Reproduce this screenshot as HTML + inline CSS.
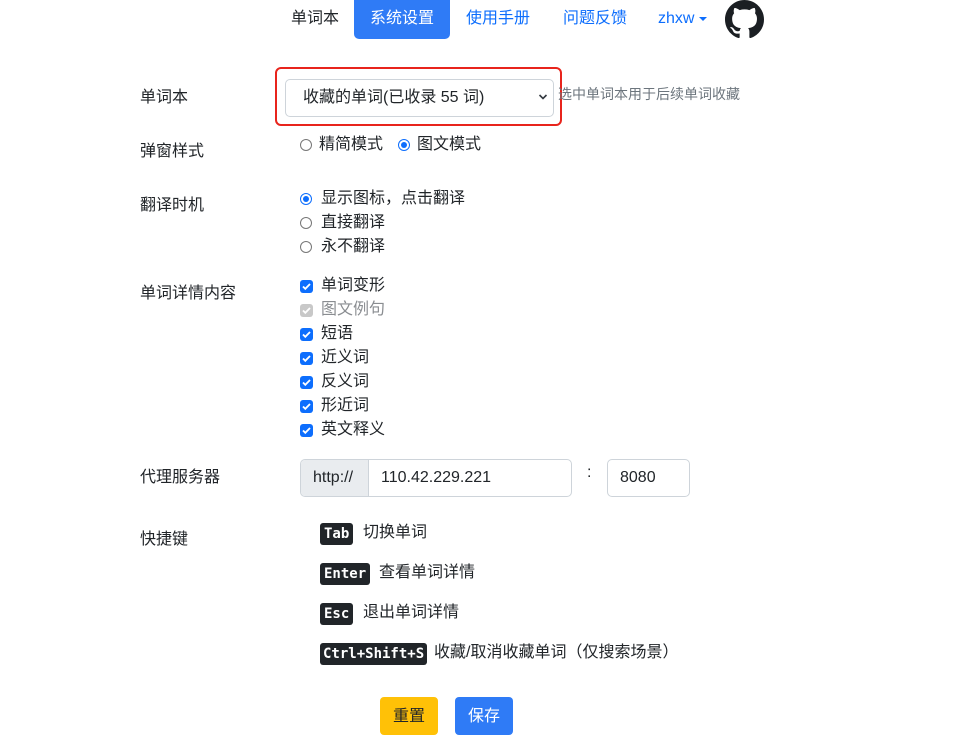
<!DOCTYPE html>
<html><head><meta charset="utf-8"><style>
*{box-sizing:border-box;margin:0;padding:0}
body{width:960px;height:749px;background:#fff;font-family:"Liberation Sans","Noto Sans CJK SC",sans-serif;color:#212529;font-size:16px;position:relative;overflow:hidden}
.a{position:absolute;white-space:nowrap;line-height:22px}
.nav{font-size:16px;line-height:20px}
.blue{color:#0d6efd}
.lbl{left:140px}
.rad{position:absolute;width:12px;height:12px;border:1px solid #777;border-radius:50%;background:#fff}
.rad.on{border:1px solid #0d6efd;background:#fff}
.rad.on::after{content:"";position:absolute;left:2px;top:2px;width:6px;height:6px;border-radius:50%;background:#0d6efd}
.cb{position:absolute;width:13px;height:13px;border-radius:3px;background:#0d6efd}
.cb.dis{background:#c8c8c8}
.cb svg{position:absolute;left:1px;top:1px}
.kbd{position:absolute;background:#212529;color:#fff;font-family:"DejaVu Sans Mono","Liberation Mono",monospace;font-weight:bold;font-size:14px;line-height:22px;height:22px;padding:0 4px;border-radius:3px}
</style></head><body>
<div class="a nav" style="left:291px;top:9px">单词本</div>
<div class="a nav" style="left:354px;top:0;width:96px;height:39px;background:#2f7bf6;color:#fff;border-radius:0 0 5px 5px;text-align:center;padding-top:9px">系统设置</div>
<div class="a nav blue" style="left:466px;top:9px">使用手册</div>
<div class="a nav blue" style="left:563px;top:9px">问题反馈</div>
<div class="a nav blue" style="left:658px;top:9px">zhxw</div>
<div style="position:absolute;left:699px;top:17px;width:0;height:0;border-left:4px solid transparent;border-right:4px solid transparent;border-top:4px solid #0d6efd"></div>
<svg style="position:absolute;left:725px;top:0" width="39" height="39" viewBox="0 0 16 16"><path fill="#1b1f23" d="M8 0C3.580 0 0 3.580 0 8c0 3.54 2.29 6.53 5.47 7.59.4.07.55-.17.55-.38 0-.19-.01-.82-.01-1.49-2.01.37-2.53-.49-2.690-.94-.09-.23-.48-.94-.82-1.13-.28-.15-.68-.52-.01-.53.63-.01 1.08.58 1.23.82.72 1.21 1.87.87 2.33.66.07-.52.28-.87.51-1.070-1.78-.2-3.64-.89-3.64-3.95 0-.87.31-1.59.82-2.15-.08-.2-.36-1.02.08-2.12 0 0 .67-.21 2.2.82.64-.18 1.32-.27 2-.27.68 0 1.36.09 2 .27 1.53-1.04 2.2-.82 2.2-.82.44 1.1.16 1.92.08 2.12.51.56.82 1.27.82 2.15 0 3.07-1.87 3.75-3.65 3.95.29.25.54.73.54 1.48 0 1.07-.01 1.93-.01 2.2 0 .21.15.46.55.38A8.013 8.013 0 0016 8c0-4.42-3.58-8-8-8z"/></svg>

<div class="a lbl" style="top:87px">单词本</div>
<div style="position:absolute;left:275px;top:67px;width:287px;height:59px;border:2px solid #e8241c;border-radius:6px"></div>
<div style="position:absolute;left:285px;top:79px;width:269px;height:38px;border:1px solid #ced4da;border-radius:5px"></div>
<div class="a" style="left:303px;top:87px;font-size:16px">收藏的单词(已收录 55 词)</div>
<svg style="position:absolute;left:538px;top:93px" width="10" height="8" viewBox="0 0 10 8"><path d="M1.5 2l3.5 3.5L8.5 2" fill="none" stroke="#343a40" stroke-width="1.6"/></svg>
<div class="a" style="left:558px;top:83px;font-size:14px;color:#6c757d">选中单词本用于后续单词收藏</div>

<div class="a lbl" style="top:141px">弹窗样式</div>
<div class="rad" style="left:300px;top:139px"></div><div class="a" style="left:319px;top:134px">精简模式</div>
<div class="rad on" style="left:398px;top:139px"></div><div class="a" style="left:417px;top:134px">图文模式</div>

<div class="a lbl" style="top:195px">翻译时机</div>
<div class="rad on" style="left:300px;top:193px"></div><div class="a" style="left:321px;top:188px">显示图标，点击翻译</div>
<div class="rad" style="left:300px;top:217px"></div><div class="a" style="left:321px;top:212px">直接翻译</div>
<div class="rad" style="left:300px;top:241px"></div><div class="a" style="left:321px;top:236px">永不翻译</div>

<div class="a lbl" style="top:283px">单词详情内容</div>
<div class="cb" style="left:300px;top:280px"><svg width="11" height="11" viewBox="0 0 11 11"><path d="M2 5.5l2.3 2.3L9 3" fill="none" stroke="#fff" stroke-width="1.8"/></svg></div><div class="a" style="left:321px;top:275px">单词变形</div>
<div class="cb dis" style="left:300px;top:304px"><svg width="11" height="11" viewBox="0 0 11 11"><path d="M2 5.5l2.3 2.3L9 3" fill="none" stroke="#fff" stroke-width="1.8"/></svg></div><div class="a" style="left:321px;top:299px;color:#8a8d91">图文例句</div>
<div class="cb" style="left:300px;top:328px"><svg width="11" height="11" viewBox="0 0 11 11"><path d="M2 5.5l2.3 2.3L9 3" fill="none" stroke="#fff" stroke-width="1.8"/></svg></div><div class="a" style="left:321px;top:323px">短语</div>
<div class="cb" style="left:300px;top:352px"><svg width="11" height="11" viewBox="0 0 11 11"><path d="M2 5.5l2.3 2.3L9 3" fill="none" stroke="#fff" stroke-width="1.8"/></svg></div><div class="a" style="left:321px;top:347px">近义词</div>
<div class="cb" style="left:300px;top:376px"><svg width="11" height="11" viewBox="0 0 11 11"><path d="M2 5.5l2.3 2.3L9 3" fill="none" stroke="#fff" stroke-width="1.8"/></svg></div><div class="a" style="left:321px;top:371px">反义词</div>
<div class="cb" style="left:300px;top:400px"><svg width="11" height="11" viewBox="0 0 11 11"><path d="M2 5.5l2.3 2.3L9 3" fill="none" stroke="#fff" stroke-width="1.8"/></svg></div><div class="a" style="left:321px;top:395px">形近词</div>
<div class="cb" style="left:300px;top:424px"><svg width="11" height="11" viewBox="0 0 11 11"><path d="M2 5.5l2.3 2.3L9 3" fill="none" stroke="#fff" stroke-width="1.8"/></svg></div><div class="a" style="left:321px;top:419px">英文释义</div>

<div class="a lbl" style="top:467px">代理服务器</div>
<div style="position:absolute;left:300px;top:459px;width:272px;height:38px;border:1px solid #ced4da;border-radius:5px;overflow:hidden"><div style="position:absolute;left:0;top:0;width:68px;height:36px;background:#e9ecef;border-right:1px solid #ced4da"></div></div>
<div class="a" style="left:313px;top:467px;font-size:16px">http://</div>
<div class="a" style="left:381px;top:467px;font-size:16px">110.42.229.221</div>
<div class="a" style="left:587px;top:462px">:</div>
<div style="position:absolute;left:607px;top:459px;width:83px;height:38px;border:1px solid #ced4da;border-radius:5px"></div>
<div class="a" style="left:620px;top:467px;font-size:16px">8080</div>

<div class="a lbl" style="top:529px">快捷键</div>
<div class="kbd" style="left:320px;top:523px">Tab</div><div class="a" style="left:363px;top:522px">切换单词</div>
<div class="kbd" style="left:320px;top:563px">Enter</div><div class="a" style="left:379px;top:562px">查看单词详情</div>
<div class="kbd" style="left:320px;top:603px">Esc</div><div class="a" style="left:363px;top:602px">退出单词详情</div>
<div class="kbd" style="left:320px;top:643px;padding:0 3px">Ctrl+Shift+S</div><div class="a" style="left:434px;top:642px">收藏/取消收藏单词（仅搜索场景）</div>

<div class="a" style="left:380px;top:697px;width:58px;height:38px;background:#ffc107;border-radius:4px;text-align:center;line-height:40px;font-size:16px">重置</div>
<div class="a" style="left:455px;top:697px;width:58px;height:38px;background:#2f7bf6;color:#fff;border-radius:4px;text-align:center;line-height:40px;font-size:16px">保存</div>
</body></html>
